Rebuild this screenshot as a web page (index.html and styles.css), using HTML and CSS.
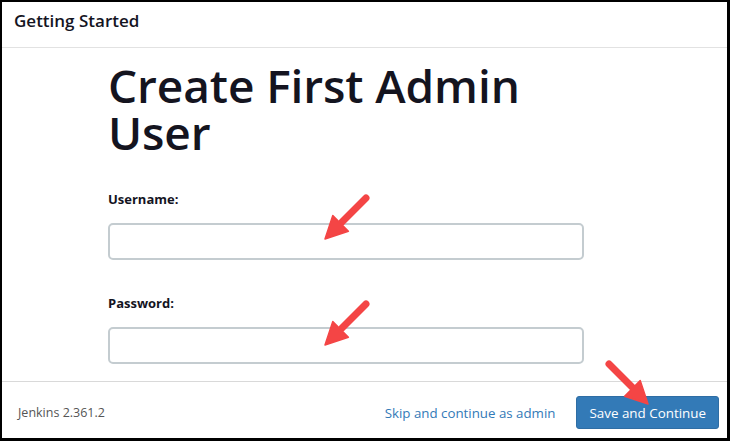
FILE: index.html
```html
<!DOCTYPE html>
<html lang="en">
<head>
<meta charset="utf-8">
<title>Getting Started</title>
<link rel="stylesheet" href="styles.css">
</head>
<body>
<div class="dialog">
  <header class="dialog-header">Getting Started</header>
  <main class="dialog-content">
    <h1 class="title">Create First Admin User</h1>
    <div class="field">
      <label class="field-label">Username:</label>
      <input class="field-input" type="text">
    </div>
    <div class="field">
      <label class="field-label">Password:</label>
      <input class="field-input" type="password">
    </div>
    <div class="field">
      <label class="field-label">Full name:</label>
      <input class="field-input" type="text">
    </div>
  </main>
  <footer class="dialog-footer">
    <span class="version">Jenkins 2.361.2</span>
    <div class="actions">
      <a class="skip-link" href="#">Skip and continue as admin</a>
      <button class="btn-primary" type="button">Save and Continue</button>
    </div>
  </footer>
  <svg class="annotations" width="730" height="441" viewBox="0 0 730 441" aria-hidden="true">
    <g class="arrow">
      <line x1="366" y1="198" x2="342" y2="222"/>
      <polygon points="325,239 348.4,231.2 332.8,215.6"/>
    </g>
    <g class="arrow">
      <line x1="366" y1="304" x2="342" y2="328"/>
      <polygon points="325,345 348.4,337.2 332.8,321.6"/>
    </g>
    <g class="arrow">
      <line x1="609" y1="364" x2="632" y2="387"/>
      <polygon points="648,404 624.6,396.2 640.2,380.6"/>
    </g>
  </svg>
</div>
</body>
</html>
```
FILE: styles.css
```css
* {
  box-sizing: border-box;
}

html, body {
  margin: 0;
  padding: 0;
  background: #fff;
}

body {
  font-family: "Open Sans", "Noto Sans", sans-serif;
  color: #14141f;
}

.dialog {
  position: relative;
  width: 730px;
  height: 441px;
  border-style: solid;
  border-color: #000;
  border-width: 2px 3px 3px 2px;
  display: flex;
  flex-direction: column;
  overflow: hidden;
  background: #fff;
}

.dialog-header {
  height: 46px;
  flex: none;
  display: flex;
  align-items: center;
  padding: 0 0 9px 12px;
  border-bottom: 1px solid #e2e2e2;
  font-size: 17px;
  font-weight: 600;
  color: #14141f;
}

.dialog-content {
  flex: 1;
  overflow: hidden;
  padding: 14px 0 0 106px;
}

.title {
  margin: 0;
  width: 476px;
  font-size: 46px;
  line-height: 47px;
  font-weight: 600;
  letter-spacing: -0.1px;
  color: #14141f;
}

.field {
  margin-top: 33px;
  width: 476px;
}

.field-label {
  display: block;
  font-size: 13px;
  line-height: 20px;
  font-weight: 700;
  color: #14141f;
}

.field-input {
  display: block;
  width: 476px;
  height: 37px;
  margin: 14px 0 0;
  border: 2px solid #c4ccd0;
  border-radius: 5px;
  background: #fff;
  font: inherit;
  outline: none;
}

.dialog-footer {
  height: 57px;
  flex: none;
  border-top: 1px solid #d9d9d9;
  display: flex;
  align-items: center;
  justify-content: space-between;
  padding: 5px 8px 0 16px;
}

.version {
  font-size: 12.5px;
  color: #555;
}

.actions {
  display: flex;
  align-items: center;
  gap: 21px;
}

.skip-link {
  font-size: 13.3px;
  color: #337ab7;
  text-decoration: none;
}

.btn-primary {
  height: 33px;
  padding: 0 12px;
  border: 1px solid #2e6da4;
  border-radius: 3px;
  background: #337ab7;
  color: #fff;
  font-family: inherit;
  font-size: 13.4px;
}

.annotations {
  position: absolute;
  left: -2px;
  top: -2px;
  pointer-events: none;
}

.arrow line {
  stroke: #f44545;
  stroke-width: 7;
  stroke-linecap: round;
}

.arrow polygon {
  fill: #f44545;
  stroke: #f44545;
  stroke-width: 1.5;
  stroke-linejoin: round;
}
```
